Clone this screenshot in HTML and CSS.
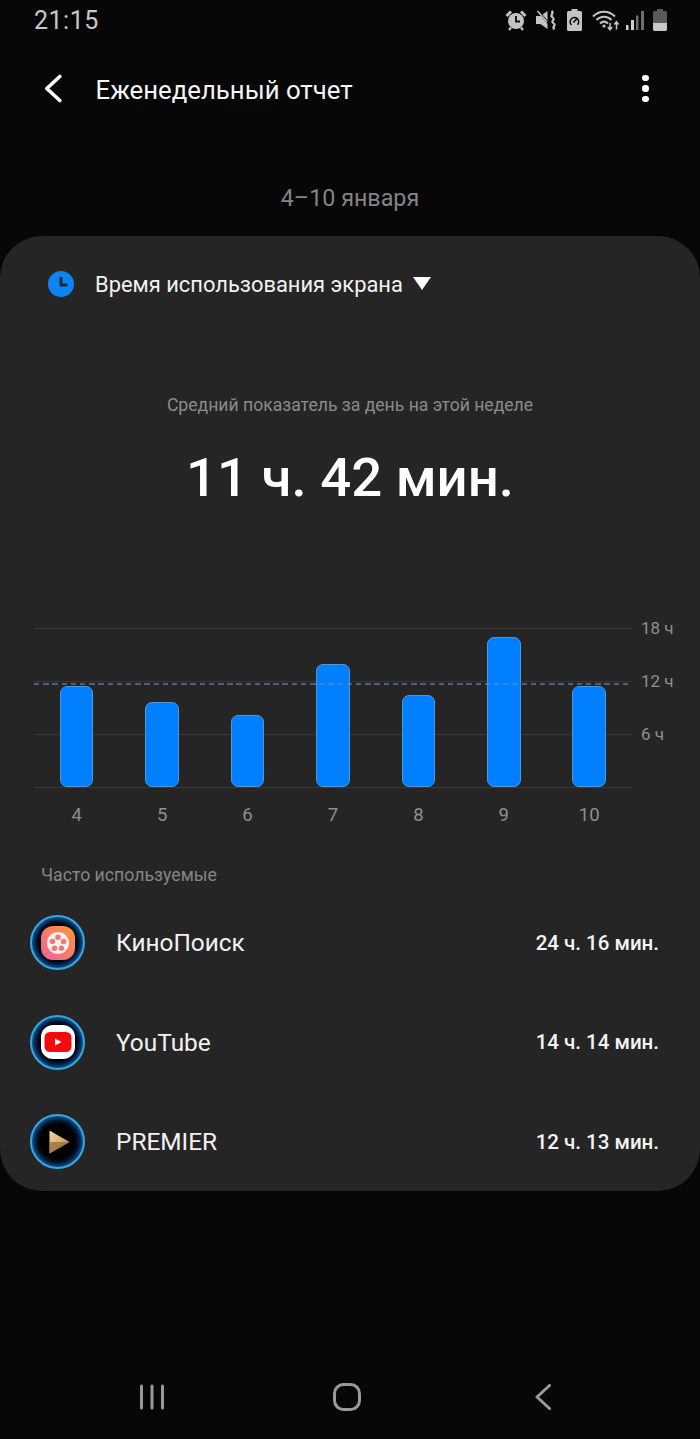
FILE: index.html
```html
<!DOCTYPE html>
<html lang="ru">
<head>
<meta charset="utf-8">
<title>Еженедельный отчет</title>
<link rel="stylesheet" href="styles.css">
</head>
<body>
<div class="screen">
  <div class="status">
    <span class="time">21:15</span>
    <div class="status-icons">
      <svg class="si alarm" width="22" height="22" viewBox="0 0 22 22"><circle cx="11" cy="12" r="8" fill="#c4c4c4"/><path d="M11 7v5.500h4" fill="none" stroke="#0a0a0a" stroke-width="1.800"/><path d="M1.500 7 6 2.500M20.500 7 16 2.500" stroke="#c4c4c4" stroke-width="3"/><path d="M6 18.500l-2 2.500M16 18.500l2 2.500" stroke="#c4c4c4" stroke-width="2.200"/></svg>
      <svg class="si mute" width="20" height="22" viewBox="0 0 20 22"><path d="M0 7h4.500L11.500 2v18L4.500 15H0z" fill="#c4c4c4"/><path d="M1 1l13 15" stroke="#0a0a0a" stroke-width="2.200"/><path d="M1.500 2l9.500 11" stroke="#c4c4c4" stroke-width="1.500"/><path d="M15.500 2c3.500 2.500-2.500 4 1 6.300s-2.500 3.700 1 6-2.500 3.500 1 6" fill="none" stroke="#c4c4c4" stroke-width="2.200"/></svg>
      <svg class="si gauge" width="15" height="22" viewBox="0 0 15 22"><path d="M4.500 0h6v2h3A1.500 1.500 0 0 1 15 3.500v17a1.500 1.500 0 0 1-1.500 1.500h-12A1.500 1.500 0 0 1 0 20.500v-17A1.500 1.500 0 0 1 1.500 2h3z" fill="#c4c4c4"/><path d="M4.500 16a4.300 4.300 0 1 1 6-.200" fill="none" stroke="#0a0a0a" stroke-width="1.500"/><path d="M6.300 13.500 10.500 9" stroke="#0a0a0a" stroke-width="1.600"/></svg>
      <svg class="si wifi" width="27" height="22" viewBox="0 0 27 22"><path d="M1 7.500C7 1 17 1 23 7.500M4.500 11C8.500 6.500 15.500 6.500 19.500 11M8 14.500c2.500-2.300 5.500-2.300 8 0" fill="none" stroke="#c4c4c4" stroke-width="2"/><circle cx="12" cy="17" r="1.600" fill="#c4c4c4"/><path d="M18 14v6.500M15.800 18l2.200 2.800L20.200 18" fill="none" stroke="#c4c4c4" stroke-width="1.500"/><path d="M24.500 20.500V13M22.300 15.500l2.200-2.800 2.200 2.800" fill="none" stroke="#c4c4c4" stroke-width="1.500"/></svg>
      <svg class="si signal" width="18" height="22" viewBox="0 0 18 22"><rect x="0" y="16" width="2.500" height="5" fill="#d0d0d0"/><rect x="5" y="11" width="3" height="10" fill="#d0d0d0"/><rect x="10" y="6.500" width="2.500" height="14.500" fill="#6e6e6e"/><rect x="15" y="2" width="3" height="19" fill="#6e6e6e"/></svg>
      <svg class="si batt" width="14" height="22" viewBox="0 0 14 22"><path d="M4 0h6v2h2.500A1.500 1.500 0 0 1 14 3.500V14H0V3.500A1.500 1.500 0 0 1 1.500 2H4z" fill="#5a5a5a"/><path d="M0 14h14v6.500a1.500 1.500 0 0 1-1.500 1.500h-11A1.500 1.500 0 0 1 0 20.500z" fill="#c8c8c8"/></svg>
    </div>
  </div>

  <header class="appbar">
    <svg class="back" width="18" height="29" viewBox="0 0 18 29"><path d="M15.800 2.500 2.800 14.500l13 12" fill="none" stroke="#fff" stroke-width="3.600" stroke-linecap="round" stroke-linejoin="round"/></svg>
    <h1 class="title">Еженедельный отчет</h1>
    <div class="more"><i></i><i></i><i></i></div>
  </header>

  <div class="date">4–10 января</div>

  <main class="card">
    <div class="selector">
      <svg class="clock" width="26" height="26" viewBox="0 0 26 26"><circle cx="13" cy="13" r="13" fill="#0d84f5"/><path d="M13 6v8h6.500" fill="none" stroke="#1b2838" stroke-width="2.800"/></svg>
      <span class="selector-text">Время использования экрана</span>
      <span class="caret"></span>
    </div>

    <p class="avg-label">Средний показатель за день на этой неделе</p>
    <p class="avg-value">11 ч. 42 мин.</p>

    <section class="chart">
      <div class="plot">
        <div class="grid-row"><span class="grid-label">18 ч</span></div>
        <div class="grid-row"><span class="grid-label">12 ч</span></div>
        <div class="grid-row"><span class="grid-label">6 ч</span></div>
        <div class="bars">
          <div class="col"><div class="bar" style="height:101px"></div></div>
          <div class="col"><div class="bar" style="height:85px"></div></div>
          <div class="col"><div class="bar" style="height:72px"></div></div>
          <div class="col"><div class="bar" style="height:123px"></div></div>
          <div class="col"><div class="bar" style="height:92px"></div></div>
          <div class="col"><div class="bar" style="height:150px"></div></div>
          <div class="col"><div class="bar" style="height:101px"></div></div>
        </div>
        <div class="avg-line"></div>
      </div>
      <div class="days">
        <span>4</span><span>5</span><span>6</span><span>7</span><span>8</span><span>9</span><span>10</span>
      </div>
    </section>

    <div class="section-label">Часто используемые</div>

    <ul class="apps">
      <li class="app">
        <span class="ring">
          <svg class="glyph-svg" width="34" height="34" viewBox="0 0 34 34">
            <defs><linearGradient id="kp" x1="0" y1="1" x2="1" y2="0"><stop offset="0" stop-color="#f45fa0"/><stop offset="1" stop-color="#fb9a2c"/></linearGradient></defs>
            <rect width="34" height="34" rx="12" fill="url(#kp)"/>
            <circle cx="17" cy="17" r="11" fill="#fbeff0"/>
            <circle cx="17" cy="11.300" r="2.700" fill="#f2786e"/><circle cx="22.600" cy="15.500" r="2.700" fill="#f2786e"/><circle cx="20.500" cy="22.300" r="2.700" fill="#f2786e"/><circle cx="13.500" cy="22.300" r="2.700" fill="#f2786e"/><circle cx="11.400" cy="15.500" r="2.700" fill="#f2786e"/>
          </svg>
        </span>
        <span class="app-name">КиноПоиск</span>
        <span class="app-time">24 ч. 16 мин.</span>
      </li>
      <li class="app">
        <span class="ring">
          <svg class="glyph-svg" width="34" height="34" viewBox="0 0 34 34">
            <rect width="34" height="34" rx="12" fill="#fff"/>
            <rect x="3.500" y="7" width="27" height="20" rx="5.500" fill="#f40c0c"/>
            <path d="M14 13.500v7l6.500-3.500z" fill="#fff"/>
          </svg>
        </span>
        <span class="app-name">YouTube</span>
        <span class="app-time">14 ч. 14 мин.</span>
      </li>
      <li class="app">
        <span class="ring">
          <svg class="glyph-svg" width="34" height="34" viewBox="0 0 34 34">
            <defs><linearGradient id="pr" x1="0" y1="0" x2="1" y2="1"><stop offset="0" stop-color="#f6d6a0"/><stop offset="1" stop-color="#b98a52"/></linearGradient></defs>
            <path d="M8.500 5.500 28.500 17 8.500 28.500z" fill="url(#pr)"/>
            <path d="M8.500 17h20L8.500 28.500z" fill="#9c6c3a" opacity=".75"/>
          </svg>
        </span>
        <span class="app-name">PREMIER</span>
        <span class="app-time">12 ч. 13 мин.</span>
      </li>
    </ul>
  </main>

  <nav class="navbar">
    <svg class="nav-recent" width="24" height="26" viewBox="0 0 24 26"><path d="M1.500 2v22M12 2v22M22.500 2v22" stroke="#9a9a9a" stroke-width="3" stroke-linecap="round"/></svg>
    <svg class="nav-home" width="28" height="28" viewBox="0 0 28 28"><rect x="1.500" y="1.500" width="25" height="25" rx="9" fill="none" stroke="#9a9a9a" stroke-width="3"/></svg>
    <svg class="nav-back" width="16" height="26" viewBox="0 0 16 26"><path d="M14.500 1.500 2 13l12.500 11.500" fill="none" stroke="#9a9a9a" stroke-width="3" stroke-linecap="round" stroke-linejoin="round"/></svg>
  </nav>
</div>
</body>
</html>
```

FILE: styles.css
```css
* { box-sizing: border-box; }
html, body { margin: 0; padding: 0; }
body { background: #070707; font-family: Roboto, "Noto Sans", sans-serif; color: #fff; }
.screen { width: 700px; height: 1439px; display: flex; flex-direction: column; overflow: hidden; }

.status { height: 40px; display: flex; align-items: center; justify-content: space-between; padding: 0 33px 0 34px; }
.time { font-size: 25px; color: #c8c8c8; letter-spacing: .5px; }
.status-icons { display: flex; align-items: center; }
.mute { margin-left: 9px; }
.gauge { margin-left: 11px; }
.wifi { margin-left: 10px; }
.signal { margin-left: 7px; }
.batt { margin-left: 9px; }

.appbar { height: 60px; margin-top: 20px; display: flex; align-items: center; padding: 0 51.500px 0 44px; }
.back { flex: none; margin-bottom: 3px; }
.title { margin: 0 0 0 33.500px; font-size: 25.750px; font-weight: 400; color: #f4f4f4; flex: 1; }
.more { display: flex; flex-direction: column; gap: 4px; margin-bottom: 3px; }
.more i { display: block; width: 6.500px; height: 6.500px; border-radius: 50%; background: #fff; }

.date { margin-top: 62px; height: 32px; line-height: 32px; text-align: center; font-size: 23.300px; color: #848484; }

.card { margin-top: 22px; height: 955px; background: #252525; border-radius: 42px; padding-top: 35px; display: flex; flex-direction: column; }

.selector { display: flex; align-items: center; height: 26px; padding-left: 48px; }
.clock { flex: none; }
.selector-text { margin-left: 21px; font-size: 21.900px; color: #f2f2f2; }
.caret { margin-left: 10px; margin-top: -1px; width: 0; height: 0; border-left: 9px solid transparent; border-right: 9px solid transparent; border-top: 13px solid #fff; }

.avg-label { margin: 97px 0 0; text-align: center; font-size: 17.600px; line-height: 22px; color: #8b8b8b; }
.avg-value { margin: 31px 0 0; text-align: center; font-size: 54.500px; line-height: 60px; font-weight: 500; color: #fff; }

.chart { margin-top: 121px; padding-left: 34px; }
.plot { position: relative; width: 598px; border-bottom: 1px solid #383838; }
.grid-row { height: 53px; border-top: 1px solid #383838; position: relative; }
.grid-label { position: absolute; left: 607px; top: -12px; font-size: 17px; line-height: 22px; color: #8f8f8f; white-space: nowrap; }
.avg-line { position: absolute; left: 0; right: 0; top: 55px; height: 2px; background: repeating-linear-gradient(90deg, rgba(96, 150, 210, .55) 0 5.500px, transparent 5.500px 9.200px); }
.bars { position: absolute; left: 0; right: 0; bottom: 0; display: flex; align-items: flex-end; }
.col { flex: 1; display: flex; justify-content: center; }
.bar { width: 33.500px; background: #0080ff; border: 1px solid #4d97de; border-radius: 7px; }
.days { width: 598px; display: flex; margin-top: 16px; }
.days span { flex: 1; text-align: center; font-size: 18.500px; line-height: 22px; color: #8f8f8f; }

.section-label { margin-top: 38px; padding-left: 41px; font-size: 17.700px; line-height: 22px; color: #858585; }

.apps { list-style: none; margin: 7px 0 0; padding: 0; }
.app { height: 99.500px; display: flex; align-items: center; padding: 0 41px 0 30px; }
.ring { flex: none; width: 55px; height: 55px; border-radius: 50%; border: 2px solid #35a7e4; background: radial-gradient(closest-side, #000 0 68%, #031a38 84%, #0a5590 100%); display: flex; align-items: center; justify-content: center; }
.app-name { margin-left: 31px; flex: 1; font-size: 24.400px; color: #f2f2f2; }
.app-time { font-size: 20.500px; font-weight: 500; color: #f4f4f4; }

.navbar { margin-top: auto; height: 82px; display: flex; align-items: center; padding: 0 0 2px 140px; }
.nav-home { margin-left: 169px; }
.nav-back { margin-left: 174px; }
```
